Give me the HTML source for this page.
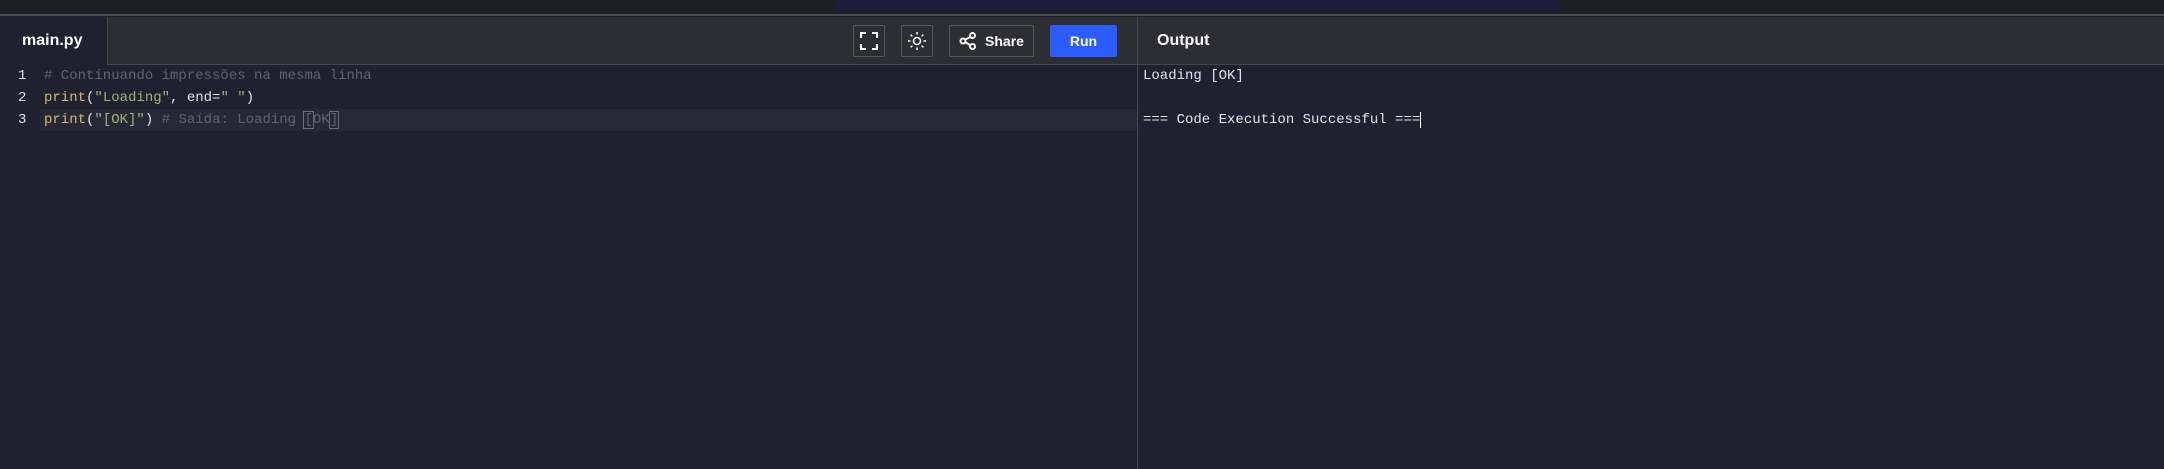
<!DOCTYPE html>
<html><head><meta charset="utf-8"><style>
*{margin:0;padding:0;box-sizing:border-box}
body{width:2164px;height:469px;background:#1f2131;position:relative;overflow:hidden;font-family:"Liberation Sans",sans-serif}
.top{position:absolute;left:0;top:0;width:2164px;height:16px;background:#1d1e22;border-bottom:2px solid #4a4b50}
.navy{position:absolute;left:835px;top:0;width:725px;height:11px;background:#1b1d3a}
.hdr{position:absolute;left:0;top:17px;width:2164px;height:48px;background:#2d2e33;border-bottom:1px solid #44464c}
.tab{position:absolute;left:0;top:17px;width:108px;height:48px;background:#1f2131;border-right:1px solid #44464c;color:#fff;font-weight:bold;font-size:16px;line-height:48px;padding-left:22px}
.btn{position:absolute;top:25px;height:32px;border:1px solid #55575d;border-radius:2px;display:flex;align-items:center;justify-content:center;color:#fff;font-weight:bold;font-size:14px}
.run{position:absolute;left:1050px;top:25px;width:67px;height:32px;background:#2b5cff;color:#fff;font-weight:bold;font-size:14px;text-align:center;line-height:32px;border-radius:2px}
.div{position:absolute;left:1137px;top:17px;width:1px;height:452px;background:#44464c}
.out{position:absolute;left:1157px;top:17px;line-height:48px;color:#fff;font-weight:bold;font-size:16px}
.code{position:absolute;font-family:"Liberation Mono",monospace;font-size:14px;line-height:22px;white-space:pre}
.hl{position:absolute;left:40px;top:109px;width:1097px;height:22px;background:#262836}
.y{color:#d7b76c}.g{color:#9cb575}.c{color:#5f6270}.w{color:#e4e4e4}
.box{outline:1px solid #6a6d78}
</style></head><body>
<div class="top"></div><div class="navy"></div>
<div class="hdr"></div>
<div class="tab">main.py</div>
<div class="btn" style="left:853px;width:32px"><svg width="18" height="18" viewBox="0 0 18 18" fill="none" stroke="#fff" stroke-width="2"><path d="M1 6V1h5M12 1h5v5M17 12v5h-5M6 17H1v-5"/></svg></div>
<div class="btn" style="left:901px;width:32px"><svg width="20" height="20" viewBox="0 0 20 20" fill="none" stroke="#fff" stroke-width="1.5"><circle cx="10" cy="10" r="3.5"/><path d="M10 1v2.5M10 16.5V19M1 10h2.5M16.5 10H19M3.6 3.6l1.8 1.8M14.6 14.6l1.8 1.8M3.6 16.4l1.8-1.8M14.6 5.4l1.8-1.8"/></svg></div>
<div class="btn" style="left:949px;width:85px;gap:8px"><svg width="18" height="18" viewBox="0 0 18 18" fill="none" stroke="#fff" stroke-width="2"><circle cx="13.5" cy="3.5" r="2.5"/><circle cx="4" cy="9" r="2.5"/><circle cx="13.5" cy="14.5" r="2.5"/><path d="M6.2 7.8l5-3M6.2 10.2l5 3"/></svg>Share</div>
<div class="run">Run</div>
<div class="div"></div>
<div class="out">Output</div>
<div class="hl"></div>
<div class="code w" style="left:18px;top:65px">1
2
3</div>
<div class="code" style="left:44px;top:65px"><span class="c"># Continuando impressões na mesma linha</span>
<span class="y">print</span><span class="w">(</span><span class="g">"Loading"</span><span class="w">, end=</span><span class="g">" "</span><span class="w">)</span>
<span class="y">print</span><span class="w">(</span><span class="g">"[OK]"</span><span class="w">)</span> <span class="c"># Saída: Loading <span class="box">[</span>OK<span class="box">]</span></span></div>
<div class="code w" style="left:1143px;top:65px">Loading [OK]

=== Code Execution Successful ===<span style="border-left:1px solid #fff"></span></div>
</body></html>
